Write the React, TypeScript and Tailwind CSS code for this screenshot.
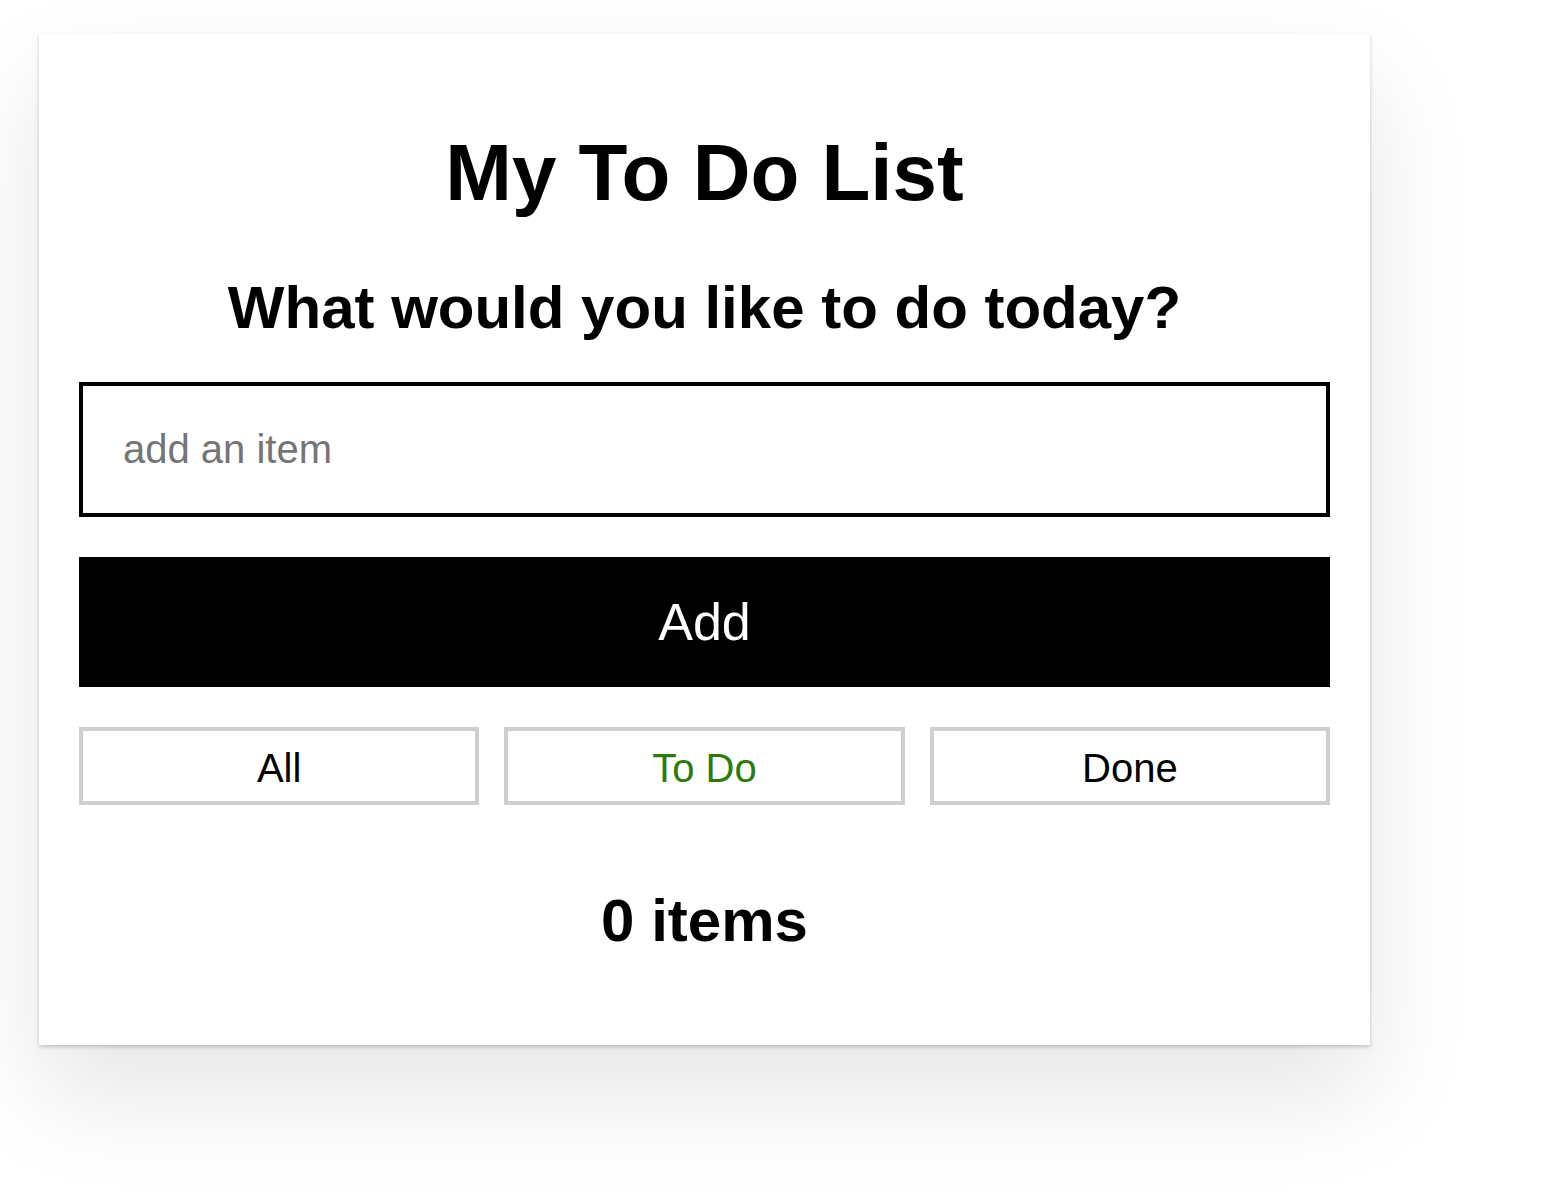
import { ReactElement } from "react";

const filters = [
  { label: "All", active: false },
  { label: "To Do", active: true },
  { label: "Done", active: false },
];

const App = (): ReactElement => {
  return (
    <div className="min-h-[1202px] w-full bg-white font-['Liberation_Sans',Arial,sans-serif] text-black overflow-hidden">
      <div className="ml-[39px] mt-[34px] w-[1331px] bg-white px-[40px] pt-[40px] pb-[94px] shadow-[0_2px_4px_0_rgba(0,0,0,0.2),0_50px_100px_0_rgba(0,0,0,0.1)]">
        <form className="flex flex-col" onSubmit={(e) => e.preventDefault()}>
          <h1 className="mt-[59px] text-center text-[80px] font-bold leading-none">My To Do List</h1>
          <h2 className="mt-[65px] text-center text-[60px] font-bold leading-none">
            <label htmlFor="new-todo-input">What would you like to do today?</label>
          </h2>
          <input
            id="new-todo-input"
            type="text"
            placeholder="add an item"
            className="mt-[44px] h-[135px] w-full border-4 border-black px-[40px] text-[40px] outline-none placeholder:text-[#757575]"
          />
          <button
            type="submit"
            className="mt-[40px] h-[130px] w-full bg-black text-[52px] text-white"
          >
            Add
          </button>
        </form>

        <div className="mt-[40px] grid grid-cols-3 gap-[25px]">
          {filters.map((f) => (
            <button
              key={f.label}
              type="button"
              className={
                f.active
                  ? "flex h-[78px] items-center justify-center border-4 border-[#cfcfcf] bg-white pt-[3px] text-[40px] text-[#2b7a0b]"
                  : "flex h-[78px] items-center justify-center border-4 border-[#cfcfcf] bg-white pt-[3px] text-[40px] text-black"
              }
            >
              {f.label}
            </button>
          ))}
        </div>

        <h2 className="mt-[86px] text-center text-[60px] font-bold leading-none">0 items</h2>
      </div>
    </div>
  );
};

export default App;
